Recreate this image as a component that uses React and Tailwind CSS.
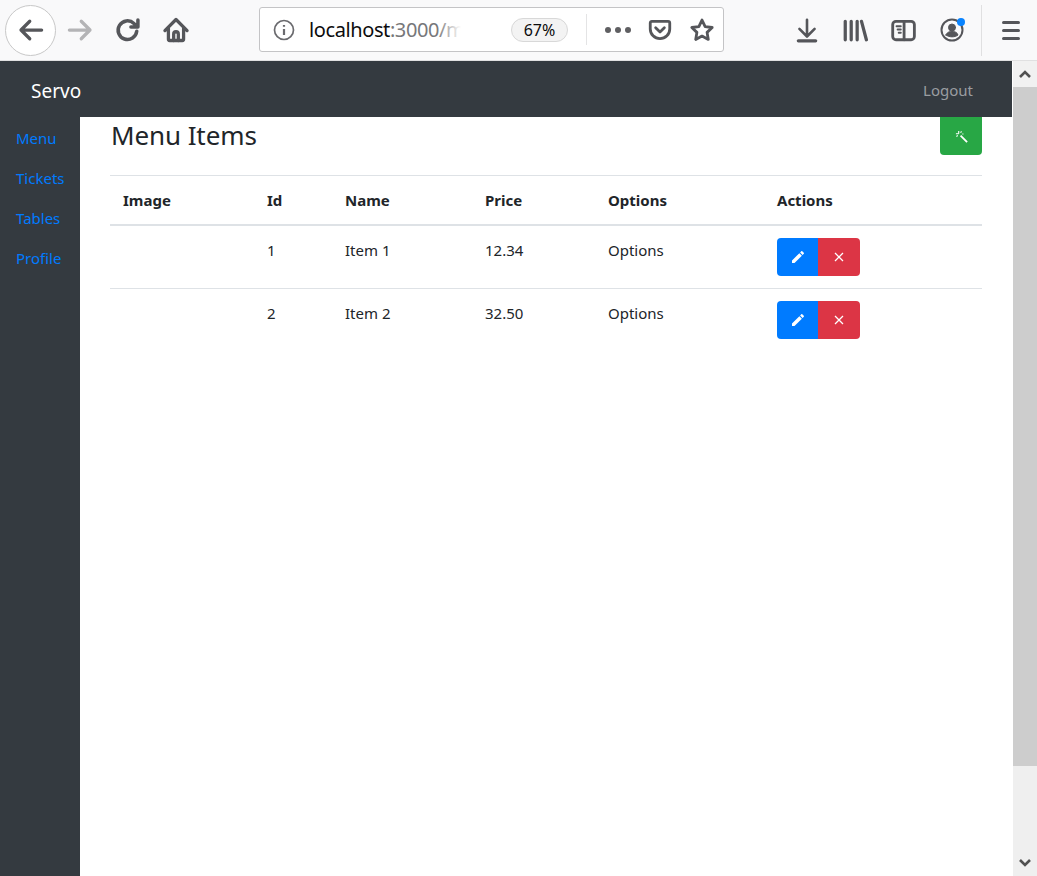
const font = {fontFamily: '"Noto Sans", sans-serif'}

const ToolbarIcon = ({className, width = "2.6", children}) => (
    <svg viewBox="0 0 24 24" fill="none" stroke="#55565a" strokeWidth={width} strokeLinecap="round" strokeLinejoin="round" className={className}>
        {children}
    </svg>
)

const BrowserBar = () => {
    return (
        <div className="flex items-center h-[61px] bg-[#f9f9fa] border-b border-[#e0e0e1] shrink-0">
            <div className="ml-[5px] w-[51px] h-[51px] rounded-full border border-[#c8c8c8] bg-white flex items-center justify-center shrink-0">
                <ToolbarIcon className="w-[30px] h-[30px]"><path d="M20.5 12H4M11 5l-7 7 7 7"/></ToolbarIcon>
            </div>
            <ToolbarIcon className="ml-[9px] w-[30px] h-[30px] shrink-0"><path stroke="#b4b4b6" d="M3.5 12H20M13 5l7 7-7 7"/></ToolbarIcon>
            <ToolbarIcon className="ml-[19px] w-[28px] h-[28px] shrink-0" width="3"><path d="M19.5 13a8 8 0 1 1-2.4-6.6L20 9M20.5 3.5V9.5H14.5"/></ToolbarIcon>
            <ToolbarIcon className="ml-[20px] w-[28px] h-[28px] shrink-0" width="2.8">
                <path d="M2.5 12.5 12 3l9.500 9.500M5.500 10.500V20a1 1 0 0 0 1 1h11a1 1 0 0 0 1-1v-9.500"/>
                <path d="M10 21v-5.500a2 2 0 0 1 4 0V21"/>
            </ToolbarIcon>

            <div className="ml-[69px] -mt-px w-[465px] h-[45px] bg-white border border-[#c4c4c6] rounded-[3px] flex items-center shrink-0">
                <svg viewBox="0 0 24 24" fill="none" stroke="#6a6a6e" strokeWidth="1.7" className="ml-[12px] w-[24px] h-[24px] shrink-0">
                    <circle cx="12" cy="12" r="9.5"/>
                    <path strokeWidth="2.2" d="M12 11v6M12 7v1.800"/>
                </svg>
                <div className="ml-[13px] w-[152px] overflow-hidden whitespace-nowrap text-[20px] tracking-[-0.4px] text-[#0c0c0d] relative">
                    localhost<span className="text-[#77777a]">:3000/menu</span>
                    <div className="absolute top-0 right-0 h-full w-[24px] bg-gradient-to-r from-white/0 to-white"></div>
                </div>
                <div className="ml-[50px] w-[57px] h-[24px] rounded-full bg-[#f3f3f3] border border-[#d8d8d8] flex items-center justify-center text-[16px] text-[#0c0c0d] shrink-0">67%</div>
                <div className="ml-[18px] w-px h-[31px] bg-[#e4e4e5] shrink-0"></div>
                <div className="ml-[18px] flex gap-[4px] shrink-0">
                    <span className="w-[6px] h-[6px] rounded-full bg-[#5f5f62]"></span>
                    <span className="w-[6px] h-[6px] rounded-full bg-[#5f5f62]"></span>
                    <span className="w-[6px] h-[6px] rounded-full bg-[#5f5f62]"></span>
                </div>
                <ToolbarIcon className="ml-[16px] w-[26px] h-[26px] shrink-0">
                    <path d="M3 5.5a1.500 1.500 0 0 1 1.500-1.500h15A1.500 1.500 0 0 1 21 5.500V11a9 9 0 0 1-18 0z"/>
                    <path d="m8 10 4 3.800L16 10"/>
                </ToolbarIcon>
                <ToolbarIcon className="ml-[16px] w-[26px] h-[26px] shrink-0">
                    <path d="m12 2.800 2.900 6 6.500.900-4.700 4.500 1.100 6.500-5.800-3.100-5.800 3.100 1.100-6.500L2.600 9.700l6.500-.900z"/>
                </ToolbarIcon>
            </div>

            <ToolbarIcon className="ml-[70px] w-[26px] h-[26px] shrink-0" width="2.4">
                <path d="M12 2.500v15M5 11l7 7 7-7"/>
                <path strokeWidth="3" d="M4 22h16"/>
            </ToolbarIcon>
            <ToolbarIcon className="ml-[22px] w-[26px] h-[26px] shrink-0">
                <path strokeWidth="3" d="M3 4v17M8.500 4v17M14 4v17M18 4l4.500 17"/>
            </ToolbarIcon>
            <ToolbarIcon className="ml-[22px] w-[26px] h-[26px] shrink-0">
                <rect x="2.500" y="4" width="20" height="17" rx="3"/>
                <path d="M13 4v17"/>
                <path strokeWidth="1.700" d="M6 8.500h4M7 11.500h3M8 14.500h2"/>
            </ToolbarIcon>
            <div className="ml-[24px] relative w-[24px] h-[24px] shrink-0">
                <ToolbarIcon className="w-[24px] h-[24px]" width="2">
                    <circle cx="12" cy="12" r="10.500"/>
                    <circle cx="12" cy="9.500" r="3.500" fill="#55565a" strokeWidth="1"/>
                    <path fill="#55565a" strokeWidth="1" d="M6 17c1-3 3.500-3.500 6-3.500s5 .5 6 3.500c-3 2.500-9 2.500-12 0z"/>
                </ToolbarIcon>
                <span className="absolute top-0 right-[-1px] w-[8px] h-[8px] rounded-full bg-[#0a84ff]"></span>
            </div>
            <div className="ml-[17px] w-px h-[51px] bg-[#e0e0e1] shrink-0"></div>
            <div className="ml-[20px] flex flex-col gap-[5px] shrink-0">
                <span className="w-[18px] h-[3px] rounded-full bg-[#55565a]"></span>
                <span className="w-[18px] h-[3px] rounded-full bg-[#55565a]"></span>
                <span className="w-[18px] h-[3px] rounded-full bg-[#55565a]"></span>
            </div>
        </div>
    )
}

const Scrollbar = () => {
    return (
        <div className="w-[24px] shrink-0 ml-px bg-[#efefef] flex flex-col">
            <div className="h-[26px] bg-[#f1f1f1] flex items-center justify-center">
                <svg viewBox="0 0 12 8" className="w-[12px] h-[8px]" fill="none" stroke="#505050" strokeWidth="2.6"><path d="M1 7l5-5 5 5"/></svg>
            </div>
            <div className="h-[679px] bg-[#cdcdcd]"></div>
            <div className="flex-1"></div>
            <div className="h-[26px] flex items-center justify-center">
                <svg viewBox="0 0 12 8" className="w-[12px] h-[8px]" fill="none" stroke="#505050" strokeWidth="2.6"><path d="M1 1l5 5 5-5"/></svg>
            </div>
        </div>
    )
}

const MenuRow = ({id, name, price}) => {
    return (
        <tr className="border-b border-[#dee2e6] last:border-b-0">
            <td className="h-[63px] pl-[13px] pr-3 pt-[13px] align-top"></td>
            <td className="pl-[13px] pr-3 pt-[13px] align-top">{id}</td>
            <td className="pl-[13px] pr-3 pt-[13px] align-top">{name}</td>
            <td className="pl-[13px] pr-3 pt-[13px] align-top">{price}</td>
            <td className="pl-[13px] pr-3 pt-[13px] align-top">Options</td>
            <td className="pl-[13px] pr-3 pt-[12px] align-top">
                <div className="flex">
                    <button className="w-[41px] h-[38px] bg-[#007bff] rounded-l-[4px] flex items-center justify-center">
                        <svg viewBox="0 0 24 24" className="w-[16px] h-[16px]" fill="#fff">
                            <path d="M3 17.250V21h3.750L17.810 9.940l-3.750-3.750L3 17.250zM20.710 7.040c.390-.390.390-1.020 0-1.410l-2.340-2.340c-.390-.390-1.020-.390-1.410 0l-1.830 1.830 3.750 3.750 1.830-1.830z"/>
                        </svg>
                    </button>
                    <button className="w-[42px] h-[38px] bg-[#dc3545] rounded-r-[4px] flex items-center justify-center">
                        <svg viewBox="0 0 10 10" className="w-[10px] h-[10px]" fill="none" stroke="#fff" strokeWidth="1.300">
                            <path d="M1 1l8 8M9 1l-8 8"/>
                        </svg>
                    </button>
                </div>
            </td>
        </tr>
    )
}

export default function App() {
    return (
        <div className="flex flex-col h-[876px] overflow-hidden bg-white text-[#212529] text-[15px]" style={font}>
            <BrowserBar/>
            <div className="flex flex-1 min-h-0">
                <div className="flex-1 flex flex-col min-w-0">
                    <div className="h-[56px] bg-[#343a40] flex items-center justify-between pl-[31px] pr-[39px] shrink-0">
                        <span className="text-white text-[19px] pt-[4px]">Servo</span>
                        <span className="text-[#9a9da0] text-[15px] pt-[3px]">Logout</span>
                    </div>
                    <div className="flex flex-1 min-h-0">
                        <div className="w-[80px] bg-[#343a40] pl-[16px] pt-[10px] flex flex-col gap-[18px] shrink-0 text-[#007bff] text-[15px]">
                            <a className="h-[22px] leading-[22px]">Menu</a>
                            <a className="h-[22px] leading-[22px]">Tickets</a>
                            <a className="h-[22px] leading-[22px]">Tables</a>
                            <a className="h-[22px] leading-[22px]">Profile</a>
                        </div>
                        <div className="flex-1 pl-[30px] pr-[30px]">
                            <div className="flex justify-between items-start h-[59px] border-b border-[#dee2e6]">
                                <h1 className="pl-px text-[26px] leading-[36px] tracking-[-0.1px]">Menu Items</h1>
                                <button className="w-[42px] h-[38px] bg-[#28a745] rounded-b-[4px] flex items-center justify-center">
                                    <svg viewBox="0 0 14 14" className="w-[13px] h-[13px]" fill="none" stroke="#fff">
                                        <path strokeWidth="2" d="M6 6l7 7"/>
                                        <path strokeWidth="1.200" d="M4 1v3M1 4h3M7 1.500 6 3M1.500 7 3 6M9 4l-1 .5"/>
                                    </svg>
                                </button>
                            </div>
                            <table className="w-[872px] table-fixed border-collapse">
                                <colgroup>
                                    <col className="w-[144px]"/>
                                    <col className="w-[78px]"/>
                                    <col className="w-[140px]"/>
                                    <col className="w-[123px]"/>
                                    <col className="w-[169px]"/>
                                    <col className="w-[218px]"/>
                                </colgroup>
                                <thead>
                                    <tr className="border-b-2 border-[#dee2e6]">
                                        <th className="h-[49px] pl-[13px] pr-3 text-left font-bold">Image</th>
                                        <th className="pl-[13px] pr-3 text-left font-bold">Id</th>
                                        <th className="pl-[13px] pr-3 text-left font-bold">Name</th>
                                        <th className="pl-[13px] pr-3 text-left font-bold">Price</th>
                                        <th className="pl-[13px] pr-3 text-left font-bold">Options</th>
                                        <th className="pl-[13px] pr-3 text-left font-bold">Actions</th>
                                    </tr>
                                </thead>
                                <tbody>
                                    <MenuRow id="1" name="Item 1" price="12.34"/>
                                    <MenuRow id="2" name="Item 2" price="32.50"/>
                                </tbody>
                            </table>
                        </div>
                    </div>
                </div>
                <Scrollbar/>
            </div>
        </div>
    )
}
